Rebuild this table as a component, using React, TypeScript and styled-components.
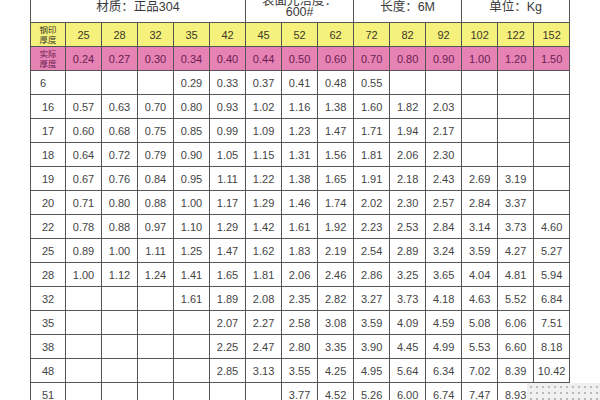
import React from 'react';
import styled, { createGlobalStyle } from 'styled-components';

const GlobalStyle = createGlobalStyle`
  html, body {
    margin: 0;
    padding: 0;
    background: #ffffff;
    overflow: hidden;
  }
  body {
    font-family: "Liberation Sans", "Noto Sans CJK SC", sans-serif;
  }
`;

const Page = styled.div`
  position: relative;
  width: 600px;
  height: 400px;
  overflow: hidden;
  background: #ffffff;
  padding-left: 30px;
  box-sizing: border-box;
`;

const Table = styled.table`
  border-collapse: collapse;
  table-layout: fixed;
  width: 539px;
  margin-top: -11px;
  color: #444;
  font-size: 11px;
`;

const TitleCell = styled.td`
  height: 30px;
  border: 1.5px solid #555;
  border-top: none;
  text-align: center;
  vertical-align: middle;
  padding: 3px 0 0;
  font-size: 12.5px;
  line-height: 11px;
  color: #3a3a3a;
  white-space: pre-line;
`;

const BandRow = styled.tr<{ $tone: 'yellow' | 'pink' }>`
  background: ${(p) => (p.$tone === 'yellow' ? '#f6f17c' : '#e682b4')};
  color: ${(p) => (p.$tone === 'yellow' ? '#3a3a2a' : '#6a1f52')};
`;

const BandCell = styled.td`
  height: 23px;
  border: 1.5px solid #555;
  text-align: center;
  padding: 0;
  font-size: 11px;
`;

const BandLabel = styled(BandCell)`
  font-size: 8.5px;
  line-height: 10px;
  white-space: pre-line;
`;

const DataCell = styled.td<{ $left?: boolean }>`
  height: 23px;
  border: 1.5px solid #555;
  text-align: ${(p) => (p.$left ? 'left' : 'center')};
  padding: ${(p) => (p.$left ? '0 0 0 9px' : '0')};
  font-size: 11px;
  color: #444;
`;

const Watermark = styled.div`
  position: absolute;
  left: 527px;
  top: 383px;
  width: 73px;
  height: 17px;
  background-color: #f0f0f0;
  background-image: radial-gradient(circle, #b8b8b8 0.7px, transparent 1px);
  background-size: 6px 6px;
  background-position: 1px 1px;
`;

const sizes = ['25', '28', '32', '35', '42', '45', '52', '62', '72', '82', '92', '102', '122', '152'];
const actual = ['0.24', '0.27', '0.30', '0.34', '0.40', '0.44', '0.50', '0.60', '0.70', '0.80', '0.90', '1.00', '1.20', '1.50'];

const rows: [string, string[]][] = [
  ['6', ['', '', '', '0.29', '0.33', '0.37', '0.41', '0.48', '0.55', '', '', '', '', '']],
  ['16', ['0.57', '0.63', '0.70', '0.80', '0.93', '1.02', '1.16', '1.38', '1.60', '1.82', '2.03', '', '', '']],
  ['17', ['0.60', '0.68', '0.75', '0.85', '0.99', '1.09', '1.23', '1.47', '1.71', '1.94', '2.17', '', '', '']],
  ['18', ['0.64', '0.72', '0.79', '0.90', '1.05', '1.15', '1.31', '1.56', '1.81', '2.06', '2.30', '', '', '']],
  ['19', ['0.67', '0.76', '0.84', '0.95', '1.11', '1.22', '1.38', '1.65', '1.91', '2.18', '2.43', '2.69', '3.19', '']],
  ['20', ['0.71', '0.80', '0.88', '1.00', '1.17', '1.29', '1.46', '1.74', '2.02', '2.30', '2.57', '2.84', '3.37', '']],
  ['22', ['0.78', '0.88', '0.97', '1.10', '1.29', '1.42', '1.61', '1.92', '2.23', '2.53', '2.84', '3.14', '3.73', '4.60']],
  ['25', ['0.89', '1.00', '1.11', '1.25', '1.47', '1.62', '1.83', '2.19', '2.54', '2.89', '3.24', '3.59', '4.27', '5.27']],
  ['28', ['1.00', '1.12', '1.24', '1.41', '1.65', '1.81', '2.06', '2.46', '2.86', '3.25', '3.65', '4.04', '4.81', '5.94']],
  ['32', ['', '', '', '1.61', '1.89', '2.08', '2.35', '2.82', '3.27', '3.73', '4.18', '4.63', '5.52', '6.84']],
  ['35', ['', '', '', '', '2.07', '2.27', '2.58', '3.08', '3.59', '4.09', '4.59', '5.08', '6.06', '7.51']],
  ['38', ['', '', '', '', '2.25', '2.47', '2.80', '3.35', '3.90', '4.45', '4.99', '5.53', '6.60', '8.18']],
  ['48', ['', '', '', '', '2.85', '3.13', '3.55', '4.25', '4.95', '5.64', '6.34', '7.02', '8.39', '10.42']],
  ['51', ['', '', '', '', '', '', '3.77', '4.52', '5.26', '6.00', '6.74', '7.47', '8.93', '']],
];

const App: React.FC = () => {
  return (
    <Page>
      <GlobalStyle />
      <Table>
        <colgroup>
          <col style={{ width: 35 }} />
          {sizes.map((s) => (
            <col key={s} style={{ width: 36 }} />
          ))}
        </colgroup>
        <tbody>
          <tr>
            <TitleCell colSpan={6}>材质：正品304</TitleCell>
            <TitleCell colSpan={3}>{'表面光洁度：\n600#'}</TitleCell>
            <TitleCell colSpan={3}>长度：6M</TitleCell>
            <TitleCell colSpan={3}>单位：Kg</TitleCell>
          </tr>
          <BandRow $tone="yellow">
            <BandLabel>{'钢印\n厚度'}</BandLabel>
            {sizes.map((s) => (
              <BandCell key={s}>{s}</BandCell>
            ))}
          </BandRow>
          <BandRow $tone="pink">
            <BandLabel>{'实际\n厚度'}</BandLabel>
            {actual.map((a, i) => (
              <BandCell key={i}>{a}</BandCell>
            ))}
          </BandRow>
          {rows.map(([label, values]) => (
            <tr key={label}>
              <DataCell $left={label === '6'}>{label}</DataCell>
              {values.map((v, i) => (
                <DataCell key={i}>{v}</DataCell>
              ))}
            </tr>
          ))}
        </tbody>
      </Table>
      <Watermark />
    </Page>
  );
};

export default App;
